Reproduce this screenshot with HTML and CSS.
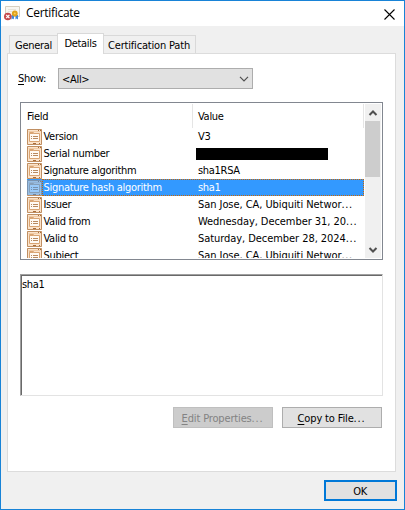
FILE: index.html
```html
<!DOCTYPE html>
<html lang="en">
<head>
<meta charset="utf-8">
<title>Certificate</title>
<link rel="stylesheet" href="styles.css">
</head>
<body>
<svg width="0" height="0" class="defs" aria-hidden="true">
  <symbol id="field" viewBox="0 0 15 16">
    <path fill="#fbe3cb" d="M0 0h15v16H0z"/>
    <path fill="none" stroke="#c08f62" d="M.5.5h14v15H.5z"/>
    <path fill="none" stroke="#f0cba6" d="M1.500 2.500h12"/>
    <path fill="#fffaf4" stroke="#d9a473" d="M2.500 4.500v-1h4v1h6v8h-10v-8h4"/>
    <path stroke="#b98a60" d="M4 7.500h1M6 7.500h5M4 9.500h1M6 9.500h5"/>
    <path fill="#a76b38" d="M11 1h1v1h-1zM13 1h1v1h-1zM6 14h3v1H6zM12 14h1v1h-1z"/>
  </symbol>
</svg>
<div class="window">
  <header class="title">
    <svg class="cert" width="16" height="16" viewBox="0 0 16 16">
      <path fill="#f8f6f1" stroke="#d6cfc0" d="M1.500 1.500h14v10h-14z"/>
      <path stroke="#e8e4da" d="M4 4.500h8M4 6.500h4"/>
      <path fill="#3d86dc" d="M7.500 10h2.500v4.500L9 13.500l-1.500 1zM11.500 10H14v4.500l-1.500-1-1 1z"/>
      <circle cx="10.800" cy="8.500" r="2.900" fill="#dfa21c"/><circle cx="10.800" cy="8.500" r="1" fill="#f7cf5c"/>
      <circle cx="3.800" cy="11.500" r="3.800" fill="#c4484c"/>
      <path stroke="#fff" stroke-width="1.300" d="M2.200 9.900l3.200 3.200M5.400 9.900l-3.200 3.200"/>
    </svg>
    <h1>Certificate</h1>
    <svg class="close" width="11" height="11" viewBox="0 0 11 11"><path stroke="#000" stroke-width="1.100" d="M.5.5l10 10M10.500.5l-10 10"/></svg>
  </header>
  <nav class="tabs">
    <span class="tab general">General</span><span class="tab active">Details</span><span class="tab path">Certification Path</span>
  </nav>
  <main class="page">
    <div class="show">
      <label><u>S</u>how:</label>
      <div class="combo"><span>&lt;All&gt;</span><svg width="10" height="6" viewBox="0 0 10 6"><path fill="none" stroke="#505050" stroke-width="1.200" d="M1 .8l4 4 4-4"/></svg></div>
    </div>
    <div class="list">
      <div class="table">
        <div class="row head"><span class="f">Field</span><span class="v">Value</span></div>
        <div class="row"><svg><use href="#field"/></svg><span class="f">Version</span><span class="v">V3</span></div>
        <div class="row"><svg><use href="#field"/></svg><span class="f">Serial number</span><span class="redacted"></span></div>
        <div class="row"><svg><use href="#field"/></svg><span class="f">Signature algorithm</span><span class="v">sha1RSA</span></div>
        <div class="row selected"><svg><use href="#field"/></svg><span class="f">Signature hash algorithm</span><span class="v">sha1</span></div>
        <div class="row"><svg><use href="#field"/></svg><span class="f">Issuer</span><span class="v wide">San Jose, CA, Ubiquiti Networ<i>...</i></span></div>
        <div class="row"><svg><use href="#field"/></svg><span class="f">Valid from</span><span class="v wide">Wednesday, December 31, 20<i>...</i></span></div>
        <div class="row"><svg><use href="#field"/></svg><span class="f">Valid to</span><span class="v wide">Saturday, December 28, 2024<i>...</i></span></div>
        <div class="row"><svg><use href="#field"/></svg><span class="f">Subject</span><span class="v wide">San Jose, CA, Ubiquiti Networ<i>...</i></span></div>
      </div>
      <div class="scroll">
        <svg width="16" height="17" viewBox="0 0 16 17"><path fill="none" stroke="#505050" stroke-width="2" d="M4.500 11L8 7.500l3.500 3.500"/></svg>
        <div class="thumb"></div>
        <svg class="down" width="16" height="17" viewBox="0 0 16 17"><path fill="none" stroke="#505050" stroke-width="2" d="M4.500 7L8 10.500 11.500 7"/></svg>
      </div>
    </div>
    <div class="detail">sha1</div>
    <div class="actions">
      <div class="button disabled"><span><u>E</u>dit Properties<i>...</i></span></div>
      <div class="button"><span><u>C</u>opy to File<i>...</i></span></div>
    </div>
  </main>
  <footer><div class="button ok">OK</div></footer>
</div>
</body>
</html>
```
FILE: styles.css
```css
* { box-sizing: border-box; }
body { margin: 0; font: 11px/17px "DejaVu Sans Condensed", "DejaVu Sans", sans-serif; font-stretch: condensed; color: #000; letter-spacing: -0.3px; }
.defs { position: absolute; }
u { text-underline-offset: 2px; }
i { font-style: normal; letter-spacing: 0.8px; }
.window { width: 405px; height: 510px; border: 1px solid #1883d7; background: #f0f0f0; display: flex; flex-direction: column; }
.title { height: 25px; background: #fff; display: flex; align-items: center; padding: 0 9px 0 3px; }
.cert { margin-top: -1px; }
.title h1 { margin: 0 0 0 6px; font: 12px/24px "Open Sans", sans-serif; letter-spacing: -0.3px; flex: 1; padding-bottom: 1px; }
.close { margin-top: 1px; }
.tabs { height: 27px; padding-left: 8px; display: flex; align-items: flex-end; white-space: nowrap; }
.tab { height: 18px; border: 1px solid #d9d9d9; border-bottom: 0; text-align: center; line-height: 19px; }
.general { width: 48px; border-right: 0; }
.path { width: 92px; border-left: 0; letter-spacing: -0.18px; padding-right: 1px; }
.active { width: 47px; height: 21px; background: #fff; margin-bottom: -1px; line-height: 19px; z-index: 1; }
.page { margin: 0 8px 0 6px; height: 419px; border: 1px solid #dcdcdc; background: #fff; padding: 14px 12px 0; }
.show { display: flex; height: 21px; align-items: center; }
.show label { width: 40px; margin-left: -2px; }
.combo { width: 195px; height: 21px; border: 1px solid #adadad; background: #e1e1e1; display: flex; align-items: center; justify-content: space-between; padding: 1px 3px 0 3px; }
.list { width: 363px; height: 158px; margin-top: 13px; border: 1px solid #828790; padding: 1px; display: flex; justify-content: space-between; overflow: hidden; }
.table { width: 342px; height: 154px; overflow: hidden; }
.row { height: 17px; display: flex; align-items: center; white-space: nowrap; padding-left: 5px; background: #fff; }
.row svg { width: 15px; height: 16px; margin-right: 1.5px; flex: none; }
.row .f { width: 154.5px; flex: none; }
.row .v { flex: 1; }
.row .wide { letter-spacing: -0.06px; }
.row .wide i { letter-spacing: 0.6px; }
.head { height: 24px; border-right: 1px solid #e5e5e5; }
.head .f { width: 166px; height: 24px; line-height: 25px; border-right: 1px solid #e5e5e5; }
.head .v { padding-left: 5px; }
.redacted { width: 132px; height: 12px; background: #000; margin-left: -2px; }
.selected { color: #fff; position: relative; background: linear-gradient(90deg, #fff 5px, #39f 5px); }
.selected::after { content: ""; position: absolute; inset: 0 0 0 20px; border: 1px dotted #cc6600; }
.selected::before { content: ""; position: absolute; left: 5px; top: 0; width: 15px; height: 16px; background: rgba(51,153,255,.5); }
.scroll { width: 16px; background: #f0f0f0; display: flex; flex-direction: column; }
.thumb { height: 56px; margin-right: 1px; background: #cdcdcd; }
.down { margin-top: auto; }
.detail { width: 363px; height: 122px; margin-top: 14px; border: 1px solid; border-color: #a0a0a0 #e3e3e3 #e3e3e3 #a0a0a0; box-shadow: inset 1px 1px #696969; padding: 1px; }
.actions { display: flex; justify-content: flex-end; gap: 9px; margin-top: 11px; padding-right: 1px; }
.button { width: 100px; height: 21px; border: 1px solid #adadad; background: #e1e1e1; display: flex; align-items: center; justify-content: center; padding: 1px 1px 0 0; letter-spacing: -0.15px; }
.disabled { background: #ccc; border-color: #bfbfbf; color: #838383; }
.ok { width: 73px; border: 2px solid #0078d7; letter-spacing: -0.5px; }
footer { display: flex; justify-content: flex-end; padding: 8px 7px 0 0; }
```
